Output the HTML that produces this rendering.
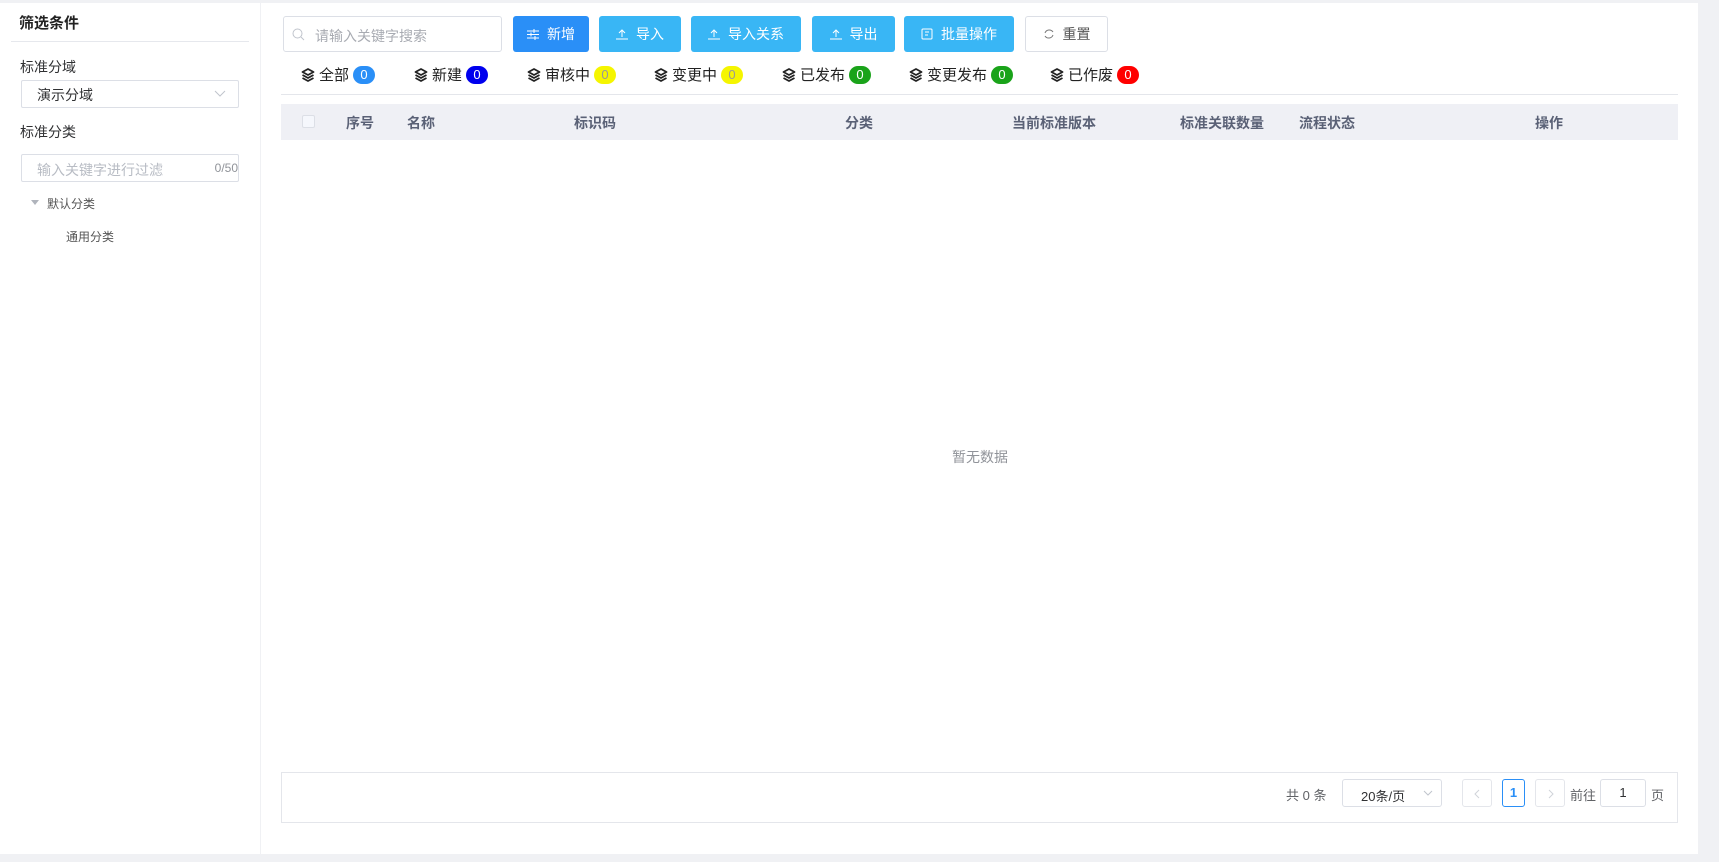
<!DOCTYPE html>
<html><head><meta charset="utf-8"><style>
*{box-sizing:border-box;margin:0;padding:0}
body{width:1719px;height:862px;background:#f0f1f4;font-family:"Liberation Sans","Noto Sans CJK SC",sans-serif;position:relative;overflow:hidden;color:#303133}
.a{position:absolute}
.lp{left:0;top:3px;width:260px;height:851px;background:#fff}
.mp{left:261px;top:3px;width:1437px;height:851px;background:#fff}
.btn{position:absolute;top:16px;height:36px;border-radius:3px;background:#39b6f5;color:#fff;font-size:14px;display:flex;align-items:center;justify-content:center;gap:8px}
.tab{position:absolute;top:64px;font-size:15px;display:flex;align-items:center;gap:4px;color:#222}
.bd{display:inline-block;min-width:22px;height:18px;border-radius:9px;font-size:13px;line-height:18px;text-align:center;color:#fff;padding:0 6px}
.th{position:absolute;top:113px;font-size:14px;color:#5a6176;font-weight:bold}
</style></head><body>
<svg width="0" height="0" style="position:absolute"><defs><symbol id="ly" viewBox="0 0 14 14"><path d="M7 1L1.5 4 7 7l5.5-3z" fill="none" stroke="#222" stroke-width="1.8" stroke-linejoin="round"/><path d="M1.5 7L7 10l5.5-3M1.5 10L7 13l5.5-3" fill="none" stroke="#222" stroke-width="1.8" stroke-linejoin="round"/></symbol></defs></svg>
<div class="a lp">
 <div class="a" style="left:19px;top:9px;font-size:15px;font-weight:bold;color:#222">筛选条件</div>
 <div class="a" style="left:11px;top:38px;width:238px;height:1px;background:#e6e8ed"></div>
 <div class="a" style="left:20px;top:54px;font-size:14px">标准分域</div>
 <div class="a" style="left:21px;top:77px;width:218px;height:28px;border:1px solid #dcdfe6;border-radius:2px;font-size:14px;padding:4px 0 0 15px">演示分域
  <svg class="a" style="right:12px;top:9px" width="12" height="8" viewBox="0 0 12 8"><path d="M1 1l5 5 5-5" fill="none" stroke="#c0c4cc" stroke-width="1"/></svg></div>
 <div class="a" style="left:20px;top:119px;font-size:14px">标准分类</div>
 <div class="a" style="left:21px;top:151px;width:218px;height:28px;border:1px solid #dcdfe6;border-radius:2px;font-size:14px;padding:5px 0 0 15px;color:#b8bcc4">输入关键字进行过滤<span class="a" style="right:0;top:6px;font-size:12px;color:#909399">0/50</span></div>
 <div class="a" style="left:31px;top:197px;width:0;height:0;border-left:4px solid transparent;border-right:4px solid transparent;border-top:5px solid #b0b4bc"></div>
 <div class="a" style="left:47px;top:192px;font-size:12px;color:#555">默认分类</div>
 <div class="a" style="left:66px;top:225px;font-size:12px;color:#555">通用分类</div>
</div>
<div class="a mp"></div>
<div class="a" style="left:283px;top:16px;width:219px;height:36px;border:1px solid #dcdfe6;border-radius:3px;font-size:14px;color:#a8abb2;padding:9px 0 0 31px">请输入关键字搜索
 <svg class="a" style="left:8px;top:11px" width="13" height="13" viewBox="0 0 13 13"><circle cx="5.5" cy="5.5" r="4.5" fill="none" stroke="#c0c4cc"/><path d="M9 9l3 3" stroke="#c0c4cc"/></svg></div>
<div class="btn" style="left:513px;width:76px;background:#2a8ff7"><svg width="12" height="11" viewBox="0 0 12 11"><path d="M0 2h12M0 5.5h12M0 9h12" stroke="#fff"/><path d="M7 0v4M4 3.5v4M8 7v4" stroke="#fff"/></svg>新增</div>
<div class="btn" style="left:599px;width:82px"><svg width="12" height="11" viewBox="0 0 12 11"><path d="M6 8V1M3 4l3-3 3 3M0 10h12" fill="none" stroke="#fff"/></svg>导入</div>
<div class="btn" style="left:691px;width:110px"><svg width="12" height="11" viewBox="0 0 12 11"><path d="M6 8V1M3 4l3-3 3 3M0 10h12" fill="none" stroke="#fff"/></svg>导入关系</div>
<div class="btn" style="left:812px;width:83px"><svg width="12" height="11" viewBox="0 0 12 11"><path d="M6 8V1M3 4l3-3 3 3M0 10h12" fill="none" stroke="#fff"/></svg>导出</div>
<div class="btn" style="left:904px;width:110px"><svg width="12" height="12" viewBox="0 0 12 12"><rect x="1" y="1" width="10" height="10" rx="1" fill="none" stroke="#fff"/><path d="M4 4h4M4 7h3" stroke="#fff"/></svg>批量操作</div>
<div class="btn" style="left:1025px;width:83px;background:#fff;border:1px solid #dcdfe6;color:#555"><svg width="12" height="12" viewBox="0 0 12 12"><path d="M10 4A4.5 4.5 0 0 0 2 5M2 8a4.5 4.5 0 0 0 8-1" fill="none" stroke="#777"/></svg>重置</div>
<div class="tab" style="left:301px"><svg width="14" height="14"><use href="#ly"/></svg>全部<span class="bd" style="background:#2a8ff7">0</span></div>
<div class="tab" style="left:414px"><svg width="14" height="14"><use href="#ly"/></svg>新建<span class="bd" style="background:#0000ee">0</span></div>
<div class="tab" style="left:527px"><svg width="14" height="14"><use href="#ly"/></svg>审核中<span class="bd" style="background:#f5f500;color:#999">0</span></div>
<div class="tab" style="left:654px"><svg width="14" height="14"><use href="#ly"/></svg>变更中<span class="bd" style="background:#f5f500;color:#999">0</span></div>
<div class="tab" style="left:782px"><svg width="14" height="14"><use href="#ly"/></svg>已发布<span class="bd" style="background:#1aa31a">0</span></div>
<div class="tab" style="left:909px"><svg width="14" height="14"><use href="#ly"/></svg>变更发布<span class="bd" style="background:#1aa31a">0</span></div>
<div class="tab" style="left:1050px"><svg width="14" height="14"><use href="#ly"/></svg>已作废<span class="bd" style="background:#f00">0</span></div>
<div class="a" style="left:281px;top:94px;width:1397px;height:1px;background:#e4e6eb"></div>
<div class="a" style="left:281px;top:104px;width:1397px;height:36px;background:#eff0f5"></div>
<div class="a" style="left:302px;top:115px;width:13px;height:13px;border:1px solid #dcdfe6;background:#f5f7fc;border-radius:2px"></div>
<div class="th" style="left:346px">序号</div>
<div class="th" style="left:407px">名称</div>
<div class="th" style="left:574px">标识码</div>
<div class="th" style="left:845px">分类</div>
<div class="th" style="left:1012px">当前标准版本</div>
<div class="th" style="left:1180px">标准关联数量</div>
<div class="th" style="left:1299px">流程状态</div>
<div class="th" style="left:1535px">操作</div>
<div class="a" style="left:952px;top:447px;font-size:14px;color:#909399">暂无数据</div>
<div class="a" style="left:281px;top:772px;width:1397px;height:51px;border:1px solid #e4e6eb"></div>
<div class="a" style="left:1286px;top:785px;font-size:13px;color:#606266">共 0 条</div>
<div class="a" style="left:1342px;top:779px;width:100px;height:28px;border:1px solid #dcdfe6;border-radius:3px;font-size:13px;padding:6px 0 0 18px">20条/页
 <svg class="a" style="right:8px;top:10px" width="10" height="6" viewBox="0 0 10 6"><path d="M1 1l4 4 4-4" fill="none" stroke="#c0c4cc"/></svg></div>
<div class="a" style="left:1462px;top:779px;width:30px;height:28px;border:1px solid #e4e6eb;border-radius:3px"><svg class="a" style="left:11px;top:9px" width="6" height="10" viewBox="0 0 6 10"><path d="M5 1L1 5l4 4" fill="none" stroke="#d0d3d9"/></svg></div>
<div class="a" style="left:1502px;top:779px;width:23px;height:28px;border:1px solid #2a8ff7;border-radius:3px;color:#2a8ff7;font-size:13px;font-weight:bold;text-align:center;line-height:26px">1</div>
<div class="a" style="left:1535px;top:779px;width:30px;height:28px;border:1px solid #e4e6eb;border-radius:3px"><svg class="a" style="left:12px;top:9px" width="6" height="10" viewBox="0 0 6 10"><path d="M1 1l4 4-4 4" fill="none" stroke="#d0d3d9"/></svg></div>
<div class="a" style="left:1570px;top:785px;font-size:13px;color:#606266">前往</div>
<div class="a" style="left:1600px;top:779px;width:46px;height:28px;border:1px solid #dcdfe6;border-radius:3px;font-size:13px;text-align:center;line-height:26px">1</div>
<div class="a" style="left:1651px;top:785px;font-size:13px;color:#606266">页</div>
</body></html>
